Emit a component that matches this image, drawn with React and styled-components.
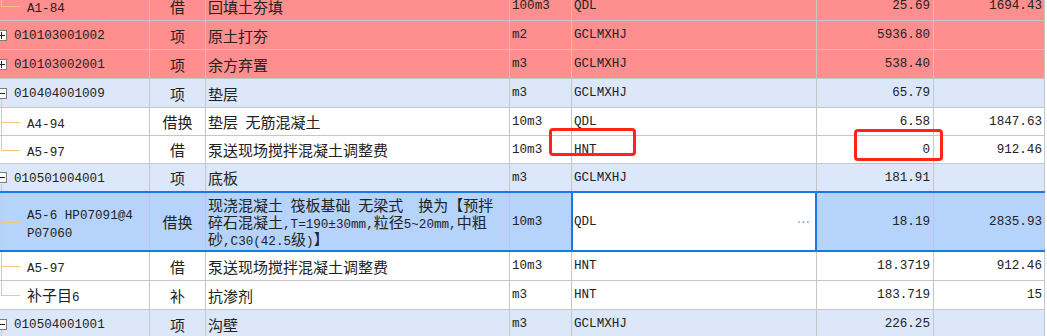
import React from "react";
import styled, { createGlobalStyle, css } from "styled-components";

const GlobalStyle = createGlobalStyle`
  html, body {
    margin: 0;
    padding: 0;
    background: #ffffff;
  }
  body {
    width: 1047px;
    height: 336px;
    overflow: hidden;
  }
`;

const GRID = "#c6c6c6";
const TREE = "#f5c57a";
const BLUE = "#1a78e6";
const MONO = `"Liberation Mono", "Noto Sans CJK SC", monospace`;
const CJK = `"Noto Sans CJK SC", "Liberation Sans", sans-serif`;

const BACKGROUNDS = {
  red: "#ff8e8e",
  blue: "#dce8fa",
  white: "#ffffff",
  sel: "#b5d3fb",
};

const rows = [
  { kind: "child", last: true, code: ["A1-84"], type: "借", name: ["回填土夯填"], unit: "100m3", expr: "QDL", qty: "25.69", price: "1694.43", bg: "red", h: 29 },
  { kind: "parent", code: ["010103001002"], type: "项", name: ["原土打夯"], unit: "m2", expr: "GCLMXHJ", qty: "5936.80", price: "", bg: "red", h: 29 },
  { kind: "parent", code: ["010103002001"], type: "项", name: ["余方弃置"], unit: "m3", expr: "GCLMXHJ", qty: "538.40", price: "", bg: "red", h: 29 },
  { kind: "parent", open: true, code: ["010404001009"], type: "项", name: ["垫层"], unit: "m3", expr: "GCLMXHJ", qty: "65.79", price: "", bg: "blue", h: 29 },
  { kind: "child", code: ["A4-94"], type: "借换", name: ["垫层 无筋混凝土"], unit: "10m3", expr: "QDL", qty: "6.58", price: "1847.63", bg: "white", h: 28 },
  { kind: "child", last: true, code: ["A5-97"], type: "借", name: ["泵送现场搅拌混凝土调整费"], unit: "10m3", expr: "HNT", qty: "0", price: "912.46", bg: "white", h: 28 },
  { kind: "parent", open: true, code: ["010501004001"], type: "项", name: ["底板"], unit: "m3", expr: "GCLMXHJ", qty: "181.91", price: "", bg: "blue", h: 28 },
  {
    kind: "child",
    selected: true,
    code: ["A5-6 HP07091@4", "P07060"],
    type: "借换",
    name: [
      "现浇混凝土 筏板基础 无梁式  换为【预拌",
      "碎石混凝土,T=190±30mm,粒径5~20mm,中粗",
      "砂,C30(42.5级)】",
    ],
    unit: "10m3",
    expr: "QDL",
    qty: "18.19",
    price: "2835.93",
    bg: "sel",
    h: 60,
  },
  { kind: "child", code: ["A5-97"], type: "借", name: ["泵送现场搅拌混凝土调整费"], unit: "10m3", expr: "HNT", qty: "18.3719", price: "912.46", bg: "white", h: 29 },
  { kind: "child", last: true, code: ["补子目6"], type: "补", name: ["抗渗剂"], unit: "m3", expr: "HNT", qty: "183.719", price: "15", bg: "white", h: 29 },
  { kind: "parent", open: true, code: ["010504001001"], type: "项", name: ["沟壁"], unit: "m3", expr: "GCLMXHJ", qty: "226.25", price: "", bg: "blue", h: 29 },
];

// split a string into latin / cjk runs so the latin parts get the narrow mono face
const runs = (text) =>
  text.split(/([\u0000-\u00ff~]+)/).filter(Boolean).map((part, i) =>
    /^[\u0000-\u00ff~]+$/.test(part) ? <Latin key={i}>{part}</Latin> : <span key={i}>{part}</span>
  );

const Expander = ({ open }) => (
  <ExpanderBox>
    <svg width="11" height="11" viewBox="0 0 11 11">
      <rect x="0.5" y="0.5" width="10" height="10" fill="#fff" stroke="#7d7d7d" />
      <line x1="2" y1="5.5" x2="9" y2="5.5" stroke="#222" />
      {!open && <line x1="5.5" y1="2" x2="5.5" y2="9" stroke="#222" />}
    </svg>
  </ExpanderBox>
);

export default function App() {
  return (
    <Page>
      <GlobalStyle />
      <Sheet>
        {rows.map((r, i) => (
          <Row key={i} h={r.h} bg={r.bg} selected={r.selected}>
            <CodeCell kind={r.kind} last={r.last} open={r.open}>
              {r.kind === "parent" && <Expander open={r.open} />}
              <CodeText parent={r.kind === "parent"}>
                {r.code.map((c, j) => (
                  <CodeLine key={j}>{runs(c)}</CodeLine>
                ))}
              </CodeText>
            </CodeCell>
            <TypeCell>{r.type}</TypeCell>
            <NameCell>
              <div>
                {r.name.map((n, j) => (
                  <NameLine key={j}>{runs(n)}</NameLine>
                ))}
              </div>
            </NameCell>
            <MonoCell>{r.unit}</MonoCell>
            <ExprCell editing={r.selected}>
              <span>{r.expr}</span>
              {r.selected && <Dots>···</Dots>}
            </ExprCell>
            <NumCell pr={3}>{r.qty}</NumCell>
            <NumCell pr={2}>{r.price}</NumCell>
          </Row>
        ))}
      </Sheet>
      <Mark x={549} y={128} w={87} h={28} />
      <Mark x={854} y={129} w={89} h={32} />
    </Page>
  );
}

const Page = styled.div`
  position: relative;
  width: 1047px;
  height: 336px;
  overflow: hidden;
  background: #fff;
`;

const Sheet = styled.div`
  display: flex;
  flex-direction: column;
  margin-top: -8px;
  width: 1045px;
`;

const Row = styled.div`
  display: grid;
  grid-template-columns: 150px 56px 304px 62px 245px 117px 111px;
  flex: 0 0 ${(p) => p.h}px;
  height: ${(p) => p.h}px;
  box-sizing: border-box;
  background: ${(p) => BACKGROUNDS[p.bg]};
  border-bottom: 1px solid ${GRID};
  color: #222;
  ${(p) =>
    p.selected &&
    css`
      border-top: 2px solid ${BLUE};
      border-bottom: 2px solid ${BLUE};
      margin-top: -1px;
      flex-basis: ${p.h + 1}px;
      height: ${p.h + 1}px;
    `}
`;

const Cell = styled.div`
  box-sizing: border-box;
  border-right: 1px solid ${GRID};
  display: flex;
  align-items: center;
  min-width: 0;
  white-space: nowrap;
  overflow: hidden;
`;

const CodeCell = styled(Cell)`
  position: relative;
  overflow: visible;
  padding-left: ${(p) => (p.kind === "parent" ? 0 : 27)}px;

  ${(p) =>
    p.kind === "child" &&
    css`
      &::before {
        content: "";
        position: absolute;
        left: 1px;
        top: 0;
        width: 1px;
        height: ${p.last ? "50%" : "100%"};
        background: ${TREE};
      }
      &::after {
        content: "";
        position: absolute;
        left: 1px;
        top: 50%;
        width: 19px;
        height: 1px;
        background: ${TREE};
      }
    `}

  ${(p) =>
    p.kind === "parent" &&
    p.open &&
    css`
      &::after {
        content: "";
        position: absolute;
        left: 1px;
        top: calc(50% + 6px);
        bottom: 0;
        width: 1px;
        background: ${TREE};
      }
    `}
`;

const ExpanderBox = styled.span`
  display: flex;
  flex: 0 0 11px;
  margin-left: -4px;
  margin-right: 7px;
`;

const CodeText = styled.div`
  font-family: ${(p) => (p.parent ? `"Liberation Sans", Arial, sans-serif` : CJK)};
  font-size: ${(p) => (p.parent ? "13.3px" : "15px")};
  color: #222;
`;

const CodeLine = styled.div`
  height: 17.5px;
  line-height: 17.5px;
`;

const Latin = styled.span`
  font-family: ${MONO};
  font-size: 12.6px;
`;

const TypeCell = styled(Cell)`
  justify-content: center;
  font-family: ${CJK};
  font-size: 15px;
`;

const NameCell = styled(Cell)`
  padding-left: 2px;
  font-family: ${CJK};
  font-size: 15px;
`;

const NameLine = styled.div`
  height: 17px;
  line-height: 17px;
  white-space: pre;
`;

const MonoCell = styled(Cell)`
  padding-left: 2px;
  font-family: ${MONO};
  font-size: 12.6px;
`;

const ExprCell = styled(MonoCell)`
  justify-content: space-between;
  padding-right: 6px;
  ${(p) =>
    p.editing &&
    css`
      position: relative;
      overflow: visible;
      background: #ffffff;
      &::after {
        content: "";
        position: absolute;
        left: -1px;
        right: -1px;
        top: -2px;
        bottom: -2px;
        border: 2px solid ${BLUE};
        pointer-events: none;
      }
    `}
`;

const Dots = styled.span`
  color: #7aa6dc;
  font-family: "DejaVu Sans", sans-serif;
  font-size: 14px;
`;

const NumCell = styled(Cell)`
  justify-content: flex-end;
  padding-right: ${(p) => p.pr}px;
  font-family: ${MONO};
  font-size: 12.6px;
`;

const Mark = styled.div`
  position: absolute;
  left: ${(p) => p.x}px;
  top: ${(p) => p.y}px;
  width: ${(p) => p.w}px;
  height: ${(p) => p.h}px;
  box-sizing: border-box;
  border: 3px solid #ff2417;
  border-radius: 4px;
`;
